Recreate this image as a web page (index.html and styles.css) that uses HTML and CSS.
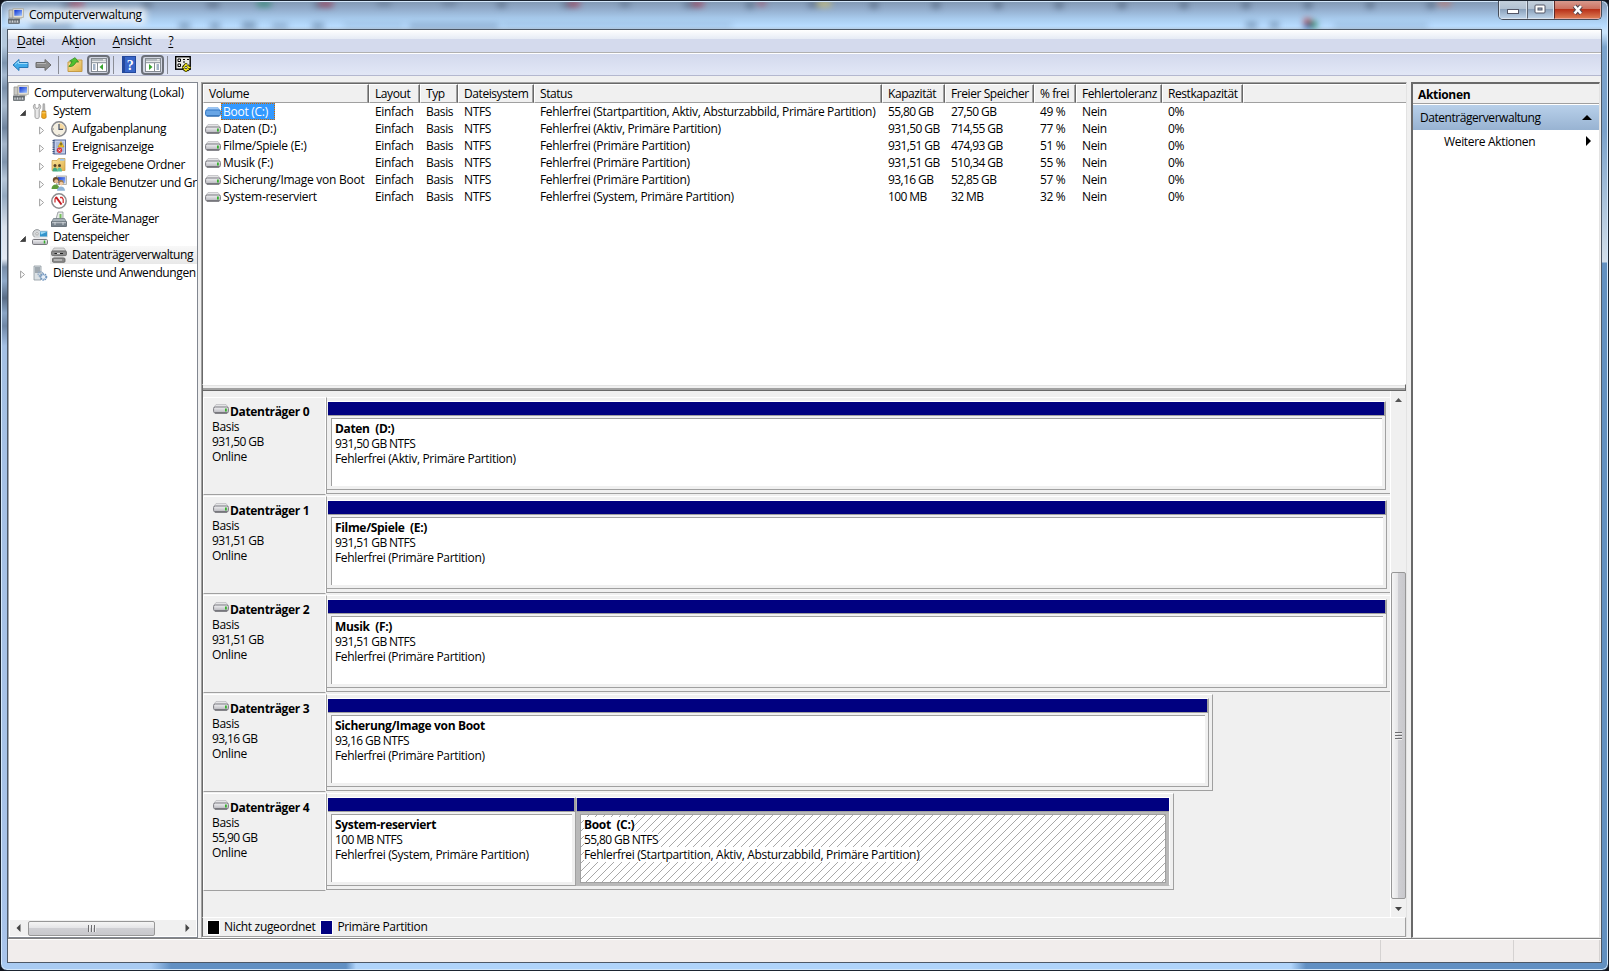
FILE: index.html
```
<!DOCTYPE html>
<html lang="de">

<head>
	<meta charset="utf-8">
	<title>Computerverwaltung</title>

	<link rel="stylesheet" href="styles.css">
</head>

<body>

	<!-- shared icons -->
	<svg class="defs" width="0" height="0">
		<defs>
			<linearGradient id="metal" x1="0" y1="0" x2="0" y2="1">
				<stop offset="0" stop-color="#f2f2f4"/>
				<stop offset="1" stop-color="#b4b4ba"/>
			</linearGradient>
			<linearGradient id="screen" x1="0" y1="0" x2="1" y2="1">
				<stop offset="0" stop-color="#0a2fd0"/>
				<stop offset="1" stop-color="#9fc4ff"/>
			</linearGradient>
			<linearGradient id="gold" x1="0" y1="0" x2="1" y2="1">
				<stop offset="0" stop-color="#fbe7a0"/>
				<stop offset="1" stop-color="#dfb04a"/>
			</linearGradient>
			<symbol id="disk" viewBox="0 0 16 10">
				<path d="M3 .5h10l2.500 3.500H.5z" fill="#e4e4e6" stroke="#b8b8bc" stroke-width=".7"/>
				<rect x=".6" y="3" width="14.800" height="6" rx="1.600" fill="url(#metal)" stroke="#7b7b81"/>
				<path d="M2 9h12" stroke="#55555b"/>
				<rect x="12" y="4.500" width="1.800" height="3" fill="#35b02c"/>
			</symbol>
			<symbol id="disk-selected" viewBox="0 0 16 10">
				<path d="M3 .5h10l2.500 3.500H.5z" fill="#9cc6f4" stroke="#79aee8" stroke-width=".6"/>
				<rect x=".6" y="3" width="14.800" height="6" rx="1.600" fill="#69a6e6" stroke="#3277c4"/>
				<path d="M2 9h12" stroke="#2c66a8"/>
			</symbol>
			<symbol id="computer" viewBox="0 0 16 16">
				<path d="M1 2h4v8H1z" fill="#c9c9c5" stroke="#8b8b88" stroke-width=".7"/>
				<rect x="5" y=".7" width="10.300" height="8.600" fill="#e9e6dc" stroke="#aaa799" stroke-width=".8"/>
				<rect x="6.300" y="1.900" width="7.700" height="5.900" fill="url(#screen)"/>
				<path d="M7 9.500h6l1 1.700H6z" fill="#c7c4b8"/>
				<path d="M0 10.500h12v2H0z" fill="#70757a"/>
				<rect x=".4" y="12" width="11" height="3.600" rx=".6" fill="#858b90" stroke="#4d5358" stroke-width=".7"/>
				<path d="M2 12.500v2M4.500 12.500v2M7 12.500v2M9.500 12.500v2" stroke="#e6e9eb" stroke-width=".8"/>
			</symbol>
			<symbol id="tools" viewBox="0 0 16 16">
				<path d="M3 1v3.500l2 1 2-1V1c2 1 2.400 4 .2 5.700V14c0 2-4.200 2-4.200 0V6.700C.7 5 1 2 3 1z" fill="#e8e8e8" stroke="#8c8c8c" stroke-width=".8"/>
				<path d="M11 .8h1.600l.3 7h-2.200z" fill="#bbb" stroke="#888" stroke-width=".5"/>
				<path d="M10 8h3.800l.4 6.200c0 1.700-4.600 1.700-4.600 0z" fill="#f0a81c" stroke="#ba7a10" stroke-width=".7"/>
				<path d="M10 9.800h3.800" stroke="#fbe08a" stroke-width=".8"/>
			</symbol>
			<symbol id="clock" viewBox="0 0 16 16">
				<circle cx="8" cy="8" r="7.200" fill="#f3eee0" stroke="#87888c" stroke-width="1.500"/>
				<path d="M8 8h5.800A5.800 5.800 0 0 0 8 2.200z" fill="#f6d9a0"/>
				<path d="M8 3v5.300h4" fill="none" stroke="#43516d" stroke-width="1.200"/>
				<path d="M8 14v-1M2 8h1" stroke="#888"/>
			</symbol>
			<symbol id="eventlog" viewBox="0 0 16 16">
				<rect x="3" y="1" width="11.500" height="14" fill="#c4d0ea" stroke="#5a6c9c"/>
				<path d="M2.500 1v14" stroke="#38507e" stroke-width="2" stroke-dasharray="1.200 1"/>
				<path d="M5 4h8M5 6h8M5 8h8M5 10h8M5 12h8" stroke="#7f94c4" stroke-width=".7"/>
				<path d="M10 2.500l3 5.500H7z" fill="#fbd12a" stroke="#b98c0c" stroke-width=".6"/>
				<path d="M10 4v2.500" stroke="#222"/>
				<circle cx="8.500" cy="11.300" r="2.700" fill="#d8343c"/>
				<path d="M7.500 10.300l2 2m0-2l-2 2" stroke="#fff" stroke-width=".8"/>
			</symbol>
			<symbol id="shared" viewBox="0 0 16 16">
				<path d="M1 3.500h5l1.500-2H14v12H1z" fill="url(#gold)" stroke="#c79a3c" stroke-width=".7"/>
				<path d="M9 1.700h4.500v2H9z" fill="#9cc5ee"/>
				<circle cx="4" cy="8.500" r="1.500" fill="#594024"/>
				<circle cx="8.500" cy="8.500" r="1.500" fill="#594024"/>
				<path d="M1.500 14.500c0-5.500 5-5.500 5 0z" fill="#43a882"/>
				<path d="M6 14.500c0-5.500 5-5.500 5 0z" fill="#5bbf9c"/>
			</symbol>
			<symbol id="users" viewBox="0 0 16 16">
				<rect x="5.500" y="1" width="10" height="8.500" fill="#e4e4e0" stroke="#9a9a94" stroke-width=".7"/>
				<rect x="6.800" y="2.200" width="7.500" height="6" fill="url(#screen)"/>
				<circle cx="4.800" cy="5" r="3" fill="#6d4c2c"/>
				<circle cx="5.300" cy="6.300" r="2" fill="#e5b88e"/>
				<path d="M.5 14c0-6 8-6 8 0z" fill="#5d9c3c"/>
				<circle cx="10" cy="7.500" r="2.600" fill="#a57a46"/>
				<circle cx="10.300" cy="8.600" r="1.800" fill="#f0cba4"/>
				<path d="M6 15.800c0-5.800 8-5.800 8 0z" fill="#8fb4d6"/>
			</symbol>
			<symbol id="gauge" viewBox="0 0 16 16">
				<circle cx="8" cy="8" r="7.200" fill="#fff" stroke="#8c8c8e" stroke-width="1.500"/>
				<path d="M4 9.500V6l1.500-2M9 4.500h2l1.200 2V10" fill="none" stroke="#d03434" stroke-width="1.300"/>
				<path d="M5 4l5.500 7.500" stroke="#c01c24" stroke-width="2"/>
			</symbol>
			<symbol id="devices" viewBox="0 0 16 16">
				<path d="M7 1h5v7H5z" fill="#e9ebea" stroke="#7d8488" stroke-width=".7"/>
				<path d="M8.500 3h2v4h-2z" fill="#74c05c"/>
				<path d="M2.500 7.500h11l2 3.500H.5z" fill="#a8b2b9" stroke="#69747c" stroke-width=".7"/>
				<rect x=".5" y="11" width="15" height="4.500" fill="#77828b" stroke="#4c565e" stroke-width=".7"/>
				<path d="M1 11.700h14M4 11v3M12 11v3" stroke="#dfe4e7" stroke-width=".8"/>
			</symbol>
			<symbol id="storage" viewBox="0 0 16 16">
				<circle cx="5" cy="4.800" r="4.200" fill="#d5d8da" stroke="#979b9e"/>
				<circle cx="5" cy="4.800" r="1.200" fill="#fff" stroke="#888" stroke-width=".6"/>
				<path d="M7.500 2h8v6h-8z" fill="#3294cc" stroke="#d4dde2"/>
				<path d="M8.500 3h6L9 5.500z" fill="#9ad8f4"/>
				<path d="M2 8.300h12l1.500 2.500H.5z" fill="#ececee"/>
				<rect x=".5" y="10.500" width="15" height="5" rx="1.200" fill="url(#metal)" stroke="#77777d"/>
				<path d="M12.500 11.500v3" stroke="#35b02c" stroke-width="1.500"/>
			</symbol>
			<symbol id="diskmgmt" viewBox="0 0 16 16">
				<path d="M3 1h10l2 3H1z" fill="#ddd" stroke="#999" stroke-width=".6"/>
				<rect x=".6" y="4" width="14.800" height="4.600" rx="1" fill="#8f8f8f" stroke="#5c5c5c" stroke-width=".8"/>
				<path d="M3.500 6.500h2.500M9 6.500h3" stroke="#222" stroke-width="1.200"/>
				<path d="M6 6.500h3" stroke="#ddd"/>
				<path d="M3 9h9.500v2H3z" fill="#d0d0d0"/>
				<rect x="1.500" y="11" width="12.500" height="4.300" rx="1" fill="#8a8a8a" stroke="#5c5c5c" stroke-width=".8"/>
				<path d="M3 13h8" stroke="#ddd"/>
			</symbol>
			<symbol id="services" viewBox="0 0 16 16">
				<path d="M2 1h7v14H2z" fill="#dbe1e5" stroke="#8d979e" stroke-width=".8"/>
				<path d="M3 3h5M3 5h5M3 7h5" stroke="#65717a"/>
				<circle cx="8.500" cy="9" r="2.200" fill="none" stroke="#93abc4" stroke-width="1.800" stroke-dasharray="1.200 .6"/>
				<circle cx="11.500" cy="12" r="2.800" fill="#e8f0f8" stroke="#6f94bd" stroke-width="2" stroke-dasharray="1.300 .7"/>
			</symbol>
			<symbol id="open" viewBox="0 0 6 6">
				<path d="M5.500.5v5h-5z" fill="#404040" stroke="#222" stroke-width=".6"/>
			</symbol>
			<symbol id="closed" viewBox="0 0 6 9">
				<path d="M.6 1l4 3.500-4 3.500z" fill="#fff" stroke="#a3a3a3"/>
			</symbol>
			<symbol id="pane-icon" viewBox="0 0 16 14">
				<rect x=".5" y=".5" width="15" height="13" fill="#fff" stroke="#858b92"/>
				<path d="M1 2h14M1 4.500h14" stroke="#9ba2a9" stroke-width="1.400"/>
				<path d="M12 1.800h2.500" stroke="#fff"/>
			</symbol>
		</defs>
	</svg>

	<div class="window">
		<!-- blurred desktop behind the glass -->
		<svg class="glass" width="1605" height="27">
			<g fill="#3d4e66" opacity=".6">
				<path d="M60 0h14v5H60zM140 0h10v5h-10zM205 0h12v5h-12zM312 0h18v5h-18zM375 0h14v3h-14zM440 0h14v3h-14zM495 0h9v5h-9zM560 0h14v5h-14zM618 0h10v4h-10zM682 0h16v5h-16zM744 0h8v6h-8zM806 0h12v5h-12zM868 0h8v6h-8zM930 0h8v6h-8zM992 0h8v6h-8zM1053 0h8v6h-8zM1116 0h8v6h-8zM1178 0h8v6h-8zM1240 0h8v6h-8zM1302 0h8v6h-8zM1364 0h8v6h-8zM1425 0h8v6h-8z"/>
			</g>
			<g fill="#b81c34" opacity=".75">
				<path d="M68 0h14v4H68zM317 0h14v4h-14zM566 0h12v4h-12zM690 0h12v4h-12zM755 0h9v3h-9z"/>
			</g>
			<path d="M255 0h14v4h-14z" fill="#238467"/>
			<path d="M815 0h14v4h-14z" fill="#d8c566"/>
			<path d="M1436 0h13v3h-13z" fill="#d56850"/>
			<g fill="#516d8c" opacity=".6">
				<path d="M28 22h42v5H28zM177 21h11v6h-11zM208 21h10v6h-10zM240 20h14v7h-14zM270 22h16v4h-16zM310 21h12v6h-12zM407 22h90v4h-90zM1244 20h11v6h-11zM1268 20h9v6h-9z"/>
			</g>
			<path d="M342 22h60v3h-60zM500 22h230v3H500zM1332 22h94v4h-94z" fill="#516d8c" opacity=".35"/>
			<path d="M1302 17h7v5h-7z" fill="#bb3636"/>
			<path d="M1302 22h7v5h-7z" fill="#326eb8"/>
			<path d="M1309 19h6v7h-6z" fill="#2d8765"/>
			<path d="M5 6h140v16H5z" fill="#fff" opacity=".55"/>
		</svg>

		<div class="titlebar">
			<svg class="icon"><use href="#computer"/></svg>
			<span class="title">Computerverwaltung</span>
			<div class="controls">
				<div class="control minimize"><svg width="13" height="6"><rect x=".5" y=".5" width="11" height="4" fill="#fff" stroke="#535666"/></svg></div>
				<div class="control maximize"><svg width="13" height="11"><rect x="1" y="1" width="10" height="8" rx="1" fill="#fff" stroke="#535666"/><rect x="4" y="4" width="4" height="2" fill="#9cb4cc" stroke="#535666"/></svg></div>
				<div class="control close"><svg width="14" height="12"><path d="M3.500 2l6.500 7.500M10 2L3.500 9.500" stroke="#4f4650" stroke-width="4.500"/><path d="M3.500 2l6.500 7.500M10 2L3.500 9.500" stroke="#fff" stroke-width="2.600"/></svg></div>
			</div>
		</div>

		<div class="client">
			<nav class="menu">
				<span><u>D</u>atei</span>
				<span>Ak<u>t</u>ion</span>
				<span><u>A</u>nsicht</span>
				<span><u>?</u></span>
			</nav>

			<div class="toolbar">
				<svg class="tool-back" width="17" height="14"><path d="M1 7l6-5.500V4.500h9v5H7v3z" fill="#3faaea" stroke="#2777b4"/><path d="M3 6.500l3.500-3v2h9" fill="none" stroke="#9edbfa"/></svg>
				<svg class="tool-forward" width="17" height="14"><path d="M16 7l-6-5.500V4.500H1v5h9v3z" fill="#8d8d8d" stroke="#6c6c6c"/><path d="M2 5.500h9" stroke="#b5b5b5"/></svg>
				<i class="separator"></i>
				<svg class="tool-up" width="16" height="17"><path d="M1 6h5l1.500-2H15v11.500H1z" fill="url(#gold)" stroke="#c59b46"/><path d="M3 11.500c1-1 1.500-3 2-5.500H2.500L7 1.500l4.500 3.500L9 5.500c-.5 3-2.500 6-6 6z" transform="rotate(14 7 6)" fill="#4fc130" stroke="#2b871b" stroke-width=".7"/></svg>
				<div class="toggle tree-toggle">
					<svg width="16" height="14"><use href="#pane-icon"/><path d="M2 7h2.500M2 9h2.500M2 11h2.500" stroke="#47668c"/><path d="M6.500 5v8" stroke="#858b92"/><path d="M12 6v6L8.500 9z" fill="#36a32c"/></svg>
				</div>
				<i class="separator"></i>
				<svg class="tool-help" width="14" height="17"><rect x=".5" y=".5" width="13" height="16" fill="#3865c8" stroke="#23489c"/><path d="M2 1v15" stroke="#254a9c" stroke-width="2"/><text x="8" y="13.500" text-anchor="middle" class="help-mark">?</text></svg>
				<div class="toggle action-toggle">
					<svg width="16" height="14"><use href="#pane-icon"/><path d="M11.500 7H14M11.500 9H14M11.500 11H14" stroke="#47668c"/><path d="M9.500 5v8" stroke="#858b92"/><path d="M4 6v6l3.500-3z" fill="#36a32c"/></svg>
				</div>
				<i class="separator"></i>
				<svg class="tool-settings" width="17" height="17"><rect x=".7" y=".7" width="14.500" height="12.500" fill="#e8e8e4" stroke="#000" stroke-width="1.400"/><path d="M3 3h2.500v2.500H3zM3 8h2.500v2.500H3z" fill="#fff" stroke="#000"/><path d="M8 3.500h2M12 3.500h2M8 6h2" stroke="#000"/><path d="M11 7v9M7 11.500h9M8.500 9l5.500 5.500M14 9l-5.500 5.500" stroke="#000" stroke-width="2.400"/><path d="M11 7.500v8M7.500 11.500h8M9 9.500l4.500 4.500M13.500 9.500L9 14" stroke="#fbf018" stroke-width="1.700"/><circle cx="11" cy="11.500" r="1.200" fill="#fff" stroke="#000" stroke-width=".7"/></svg>
			</div>

			<div class="panes">
				<div class="tree">
					<ul>
						<li class="root"><svg class="icon"><use href="#computer"/></svg><span>Computerverwaltung (Lokal)</span></li>
						<li class="level1"><svg class="open"><use href="#open"/></svg><svg class="icon"><use href="#tools"/></svg><span>System</span></li>
						<li class="level2"><svg class="closed"><use href="#closed"/></svg><svg class="icon"><use href="#clock"/></svg><span>Aufgabenplanung</span></li>
						<li class="level2"><svg class="closed"><use href="#closed"/></svg><svg class="icon"><use href="#eventlog"/></svg><span>Ereignisanzeige</span></li>
						<li class="level2"><svg class="closed"><use href="#closed"/></svg><svg class="icon"><use href="#shared"/></svg><span>Freigegebene Ordner</span></li>
						<li class="level2"><svg class="closed"><use href="#closed"/></svg><svg class="icon"><use href="#users"/></svg><span>Lokale Benutzer und Gruppen</span></li>
						<li class="level2"><svg class="closed"><use href="#closed"/></svg><svg class="icon"><use href="#gauge"/></svg><span>Leistung</span></li>
						<li class="level2 leaf"><svg class="icon"><use href="#devices"/></svg><span>Geräte-Manager</span></li>
						<li class="level1"><svg class="open"><use href="#open"/></svg><svg class="icon"><use href="#storage"/></svg><span>Datenspeicher</span></li>
						<li class="level2 leaf selected"><svg class="icon"><use href="#diskmgmt"/></svg><span>Datenträgerverwaltung</span></li>
						<li class="level1"><svg class="closed"><use href="#closed"/></svg><svg class="icon"><use href="#services"/></svg><span>Dienste und Anwendungen</span></li>
					</ul>
					<div class="hscroll">
						<svg class="arrow" width="5" height="8"><path d="M4.500 0v8L.5 4z" fill="#444"/></svg>
						<div class="hthumb"><i></i><i></i><i></i></div>
						<svg class="arrow" width="5" height="8"><path d="M.5 0v8l4-4z" fill="#444"/></svg>
					</div>
				</div>

				<div class="main">
					<div class="volumes">
						<div class="row head">
							<span>Volume</span><span>Layout</span><span>Typ</span><span>Dateisystem</span><span>Status</span><span>Kapazität</span><span>Freier Speicher</span><span>% frei</span><span>Fehlertoleranz</span><span>Restkapazität</span><span></span>
						</div>
						<div class="row">
							<span class="name"><svg class="disk"><use href="#disk-selected"/></svg><b class="marked">Boot (C:)</b></span><span>Einfach</span><span>Basis</span><span>NTFS</span><span>Fehlerfrei (Startpartition, Aktiv, Absturzabbild, Primäre Partition)</span><span class="num">55,80 GB</span><span class="num">27,50 GB</span><span>49 %</span><span>Nein</span><span>0%</span>
						</div>
						<div class="row">
							<span class="name"><svg class="disk"><use href="#disk"/></svg><b>Daten (D:)</b></span><span>Einfach</span><span>Basis</span><span>NTFS</span><span>Fehlerfrei (Aktiv, Primäre Partition)</span><span class="num">931,50 GB</span><span class="num">714,55 GB</span><span>77 %</span><span>Nein</span><span>0%</span>
						</div>
						<div class="row">
							<span class="name"><svg class="disk"><use href="#disk"/></svg><b>Filme/Spiele (E:)</b></span><span>Einfach</span><span>Basis</span><span>NTFS</span><span>Fehlerfrei (Primäre Partition)</span><span class="num">931,51 GB</span><span class="num">474,93 GB</span><span>51 %</span><span>Nein</span><span>0%</span>
						</div>
						<div class="row">
							<span class="name"><svg class="disk"><use href="#disk"/></svg><b>Musik (F:)</b></span><span>Einfach</span><span>Basis</span><span>NTFS</span><span>Fehlerfrei (Primäre Partition)</span><span class="num">931,51 GB</span><span class="num">510,34 GB</span><span>55 %</span><span>Nein</span><span>0%</span>
						</div>
						<div class="row">
							<span class="name"><svg class="disk"><use href="#disk"/></svg><b>Sicherung/Image von Boot</b></span><span>Einfach</span><span>Basis</span><span>NTFS</span><span>Fehlerfrei (Primäre Partition)</span><span class="num">93,16 GB</span><span class="num">52,85 GB</span><span>57 %</span><span>Nein</span><span>0%</span>
						</div>
						<div class="row">
							<span class="name"><svg class="disk"><use href="#disk"/></svg><b>System-reserviert</b></span><span>Einfach</span><span>Basis</span><span>NTFS</span><span>Fehlerfrei (System, Primäre Partition)</span><span class="num">100 MB</span><span class="num">32 MB</span><span>32 %</span><span>Nein</span><span>0%</span>
						</div>
					</div>

					<div class="splitter"></div>

					<div class="map">
						<div class="disks">
							<div class="drive">
								<div class="label"><h3><svg class="disk"><use href="#disk"/></svg>Datenträger 0</h3><p>Basis</p><p class="num">931,50 GB</p><p>Online</p></div>
								<div class="graph">
									<div class="partition" style="width: 1059px"><div class="bar"></div><div class="info"><h4>Daten&nbsp; (D:)</h4><p class="num">931,50 GB NTFS</p><p>Fehlerfrei (Aktiv, Primäre Partition)</p></div></div>
								</div>
							</div>
							<div class="drive">
								<div class="label"><h3><svg class="disk"><use href="#disk"/></svg>Datenträger 1</h3><p>Basis</p><p class="num">931,51 GB</p><p>Online</p></div>
								<div class="graph">
									<div class="partition" style="width: 1060px"><div class="bar"></div><div class="info"><h4>Filme/Spiele&nbsp; (E:)</h4><p class="num">931,51 GB NTFS</p><p>Fehlerfrei (Primäre Partition)</p></div></div>
								</div>
							</div>
							<div class="drive">
								<div class="label"><h3><svg class="disk"><use href="#disk"/></svg>Datenträger 2</h3><p>Basis</p><p class="num">931,51 GB</p><p>Online</p></div>
								<div class="graph">
									<div class="partition" style="width: 1060px"><div class="bar"></div><div class="info"><h4>Musik&nbsp; (F:)</h4><p class="num">931,51 GB NTFS</p><p>Fehlerfrei (Primäre Partition)</p></div></div>
								</div>
							</div>
							<div class="drive short">
								<div class="label"><h3><svg class="disk"><use href="#disk"/></svg>Datenträger 3</h3><p>Basis</p><p class="num">93,16 GB</p><p>Online</p></div>
								<div class="graph">
									<div class="partition" style="width: 882px"><div class="bar"></div><div class="info"><h4>Sicherung/Image von Boot</h4><p class="num">93,16 GB NTFS</p><p>Fehlerfrei (Primäre Partition)</p></div></div>
								</div>
							</div>
							<div class="drive short">
								<div class="label"><h3><svg class="disk"><use href="#disk"/></svg>Datenträger 4</h3><p>Basis</p><p class="num">55,90 GB</p><p>Online</p></div>
								<div class="graph">
									<div class="partition" style="width: 249px"><div class="bar"></div><div class="info"><h4>System-reserviert</h4><p class="num">100 MB NTFS</p><p>Fehlerfrei (System, Primäre Partition)</p></div></div>
									<div class="partition active" style="width: 594px"><div class="bar"></div><div class="info"><h4>Boot&nbsp; (C:)</h4><p class="num">55,80 GB NTFS</p><p>Fehlerfrei (Startpartition, Aktiv, Absturzabbild, Primäre Partition)</p></div></div>
								</div>
							</div>
						</div>
						<div class="vscroll">
							<svg class="up" width="7" height="4"><path d="M0 4h7L3.500 0z" fill="#555"/></svg>
							<div class="vthumb"><i></i><i></i><i></i></div>
							<svg class="down" width="7" height="4"><path d="M0 0h7L3.500 4z" fill="#444"/></svg>
						</div>
					</div>

					<div class="legend">
						<i class="swatch unallocated"></i><span>Nicht zugeordnet</span>
						<i class="swatch primary"></i><span>Primäre Partition</span>
					</div>
				</div>

				<div class="actions">
					<h2>Aktionen</h2>
					<div class="group"><span>Datenträgerverwaltung</span><svg width="10" height="5"><path d="M0 5h10L5 0z"/></svg></div>
					<div class="action"><span>Weitere Aktionen</span><svg width="5" height="10"><path d="M0 0v10l5-5z"/></svg></div>
				</div>
			</div>

			<div class="statusbar"><span></span><span></span><span></span></div>
		</div>
	</div>

</body>

</html>
```

FILE: styles.css
```
* {
	box-sizing: border-box;
}

body {
	margin: 0;
	background: #10141c;
	font-family: "Open Sans", "Noto Sans", sans-serif;
	font-size: 12px;
	letter-spacing: -0.33px;
	color: #000;
	overflow: hidden;
}

h2, h3, h4, p, ul {
	margin: 0;
	padding: 0;
	font-size: 12px;
}

svg {
	display: block;
	flex: none;
}

.defs {
	position: absolute;
}

.icon {
	width: 16px;
	height: 16px;
}

.disk {
	width: 16px;
	height: 10px;
}

.num {
	letter-spacing: -0.6px;
}

/* window frame */

.window {
	position: relative;
	width: 1609px;
	height: 971px;
	display: flex;
	flex-direction: column;
	padding: 0 6px 7px;
	border: 1px solid #1b2430;
	border-radius: 7px;
	box-shadow: inset 0 0 0 1px #d4e8fb;
	background:
		linear-gradient(#8198b2 0, #92accb 8px, #a9ccee 18px, #b8dcff 25px, transparent 29px) top / 100% 29px no-repeat,
		linear-gradient(#bfdffc 0, #c9e3fb 32px, #7ba3cc 46px, #7aa1ca 130px, #c9d8e6 245px, #d3deea 261px, #6290c0 262px) right / 7px 100% no-repeat,
		linear-gradient(90deg, #a9cbf2 150px, #6290c3 170px, #6290c3 345px, #b0d4fa 355px, #b0d4fa 1290px, #6290c3 1305px) bottom / 100% 8px no-repeat,
		linear-gradient(#b4c8dd 45px, #7d94ae 62px, #a5b9d0 74px, #7a90aa 87px, #a8bace 105px, #70859f 127px, #a5b6ca 143px, #7f94ad 161px, #b6c6d8 178px, #94a9c0 195px, #d9e1ec 226px, #e3eaf4 258px, #788da8 266px, #8fa9c8 280px, #586c86 297px, #8aa5c5 312px, #6f87a6 325px, #a4c0e4 345px, #a9c4ea);
}

.glass {
	position: absolute;
	top: 1px;
	left: 1px;
	overflow: hidden;
	filter: blur(3px);
	clip-path: inset(0);
}

.titlebar {
	position: relative;
	flex: none;
	height: 28px;
	display: flex;
	align-items: flex-start;
	padding-left: 1px;
}

.titlebar .icon {
	margin: 7px 5px 0 0;
}

.title {
	padding-top: 5px;
	line-height: 18px;
	text-shadow: 0 0 6px #fff, 0 0 8px #fff;
}

.controls {
	display: flex;
	width: 104px;
	height: 19px;
	margin-left: auto;
	border: 1px solid #454c58;
	border-top: none;
	border-radius: 0 0 5px 5px;
	overflow: hidden;
}

.control {
	display: flex;
	align-items: center;
	justify-content: center;
	width: 28px;
	border: 1px solid #dbe4ee;
	border-top: none;
	background: linear-gradient(#c3cfdb, #b0c0d1 48%, #8ca2bb 50%, #bcd2e8);
}

.maximize {
	width: 27px;
	border-left-color: #5d6673;
}

.close {
	flex: 1;
	border-color: #e8a79a;
	border-left-color: #5e2a28;
	background: linear-gradient(#d8998d, #cb6f5e 48%, #b83119 50%, #dc7a52);
}

.minimize {
	padding-top: 5px;
}

.client {
	flex: 1;
	min-height: 0;
	display: flex;
	flex-direction: column;
	border: 1px solid #4d5866;
	background: #f0f0f0;
}

/* menu and toolbar */

.menu {
	flex: none;
	display: flex;
	height: 23px;
	padding-left: 9px;
	gap: 17px;
	line-height: 22px;
	background: linear-gradient(#fff, #e6ebf5 9px, #d4daed 9px);
	border-bottom: 1px solid #b0b0b0;
}

.menu u {
	text-underline-offset: 2px;
}

.toolbar {
	flex: none;
	display: flex;
	align-items: center;
	height: 23px;
	padding-left: 4px;
	border-top: 1px solid #fff;
	border-bottom: 1px solid #b4b8cf;
	background: linear-gradient(#d3d9ed, #e2e7f6);
}

.separator {
	width: 1px;
	height: 18px;
	margin-left: 3px;
	background: #8a8d96;
}

.tool-forward {
	margin-left: 6px;
}

.tool-back + .tool-forward + .separator {
	margin-left: 6px;
}

.tool-up {
	margin: 0 4px 0 8px;
}

.toggle {
	display: flex;
	align-items: center;
	justify-content: center;
	width: 23px;
	height: 20px;
	border: 2px solid #6c7079;
	border-radius: 4px;
	background: #d2d6e2;
}

.tool-help {
	margin: 0 5px 0 8px;
}

.help-mark {
	font: bold 14px "Liberation Serif", serif;
	fill: #fff;
}

.tool-settings {
	margin-left: 7px;
}

/* panes */

.panes {
	flex: 1;
	min-height: 0;
	display: flex;
	padding: 6px 1px 0 0;
}

.tree {
	width: 190px;
	display: flex;
	flex-direction: column;
	border: 1px solid #828790;
	border-left-color: #a5a9b0;
	background: #fff;
	margin-right: 3px;
	flex: none;
}

.tree ul {
	flex: 1;
	list-style: none;
	overflow: hidden;
	padding-top: 1px;
}

.tree li {
	display: flex;
	align-items: center;
	height: 18px;
	white-space: nowrap;
	overflow: hidden;
}

.tree li span {
	margin-left: 5px;
	padding-bottom: 2px;
}

.root {
	padding-left: 4px;
}

.level1 {
	padding-left: 11px;
}

.level1 .icon {
	margin-left: 6px;
}

.level1 span {
	letter-spacing: -0.4px;
}

.level2 {
	padding-left: 30px;
}

.level2.leaf {
	padding-left: 42px;
}

.level2 .closed {
	margin-right: 6px;
}

.open {
	width: 6px;
	height: 6px;
	margin-top: 3px;
}

.closed {
	width: 6px;
	height: 9px;
	margin-top: 2px;
}

.selected {
	background: linear-gradient(#f8f8f8, #e8e8e8) 41px 0 no-repeat;
}

.selected span {
	letter-spacing: -0.42px;
}

.hscroll {
	display: flex;
	align-items: center;
	height: 16px;
	margin: 0 1px 1px;
	padding: 0 6px;
	background: #f0f0f0;
}

.hthumb {
	display: flex;
	align-items: center;
	justify-content: center;
	gap: 1px;
	width: 127px;
	height: 15px;
	margin: 0 auto 0 7px;
	border: 1px solid #979797;
	border-radius: 2px;
	background: linear-gradient(#f5f5f5, #e4e4e6 48%, #cfcfd3 50%, #c8c8cc);
}

.hthumb i {
	width: 2px;
	height: 7px;
	background: #6d6d70;
	border-right: 1px solid #eee;
}

/* volume list */

.main {
	width: 1206px;
	flex: none;
	display: flex;
	flex-direction: column;
	margin-right: 4px;
	border: 1px solid #a0a0a0;
	border-right-color: #e3e3e3;
	border-bottom-color: #fff;
}

.volumes {
	flex: none;
	height: 301px;
	border-top: 1px solid #696969;
	border-left: 1px solid #696969;
	background: #fff;
}

.row {
	display: grid;
	grid-template-columns: 166px 51px 38px 76px 348px 63px 89px 42px 86px 81px 1fr;
	height: 17px;
	line-height: 17px;
	white-space: nowrap;
}

.row span {
	padding-left: 6px;
}

.row.head {
	height: 19px;
	line-height: 18px;
	background: #f0f0f0;
	border-bottom: 1px solid #696969;
}

.head span {
	border-top: 1px solid #fff;
	border-left: 1px solid #fff;
	border-right: 1px solid #696969;
	border-bottom: 1px solid #a0a0a0;
	box-shadow: inset -1px 0 #a0a0a0;
	padding-left: 5px;
	line-height: 17px;
	letter-spacing: -0.42px;
}

.head span:last-child {
	border-right: none;
	box-shadow: none;
}

.row .name {
	display: flex;
	align-items: center;
	padding-left: 2px;
	letter-spacing: -0.26px;
}

.name b {
	font-weight: normal;
	padding: 0 6px 0 2px;
}

.name .marked {
	height: 17px;
	padding-right: 7px;
	color: #fff;
	background: #3399ff;
	outline: 1px dotted #cc6600;
	outline-offset: -1px;
}

.splitter {
	flex: none;
	height: 7px;
	border-top: 1px solid #fff;
	border-right: 1px solid #696969;
	border-bottom: 1px solid #696969;
	border-left: 1px solid #696969;
	background: linear-gradient(#e3e3e3 0 1px, #f0f0f0 1px 3px, #a0a0a0 3px);
}

/* disk map */

.map {
	flex: 1;
	min-height: 0;
	display: flex;
	border-left: 1px solid #696969;
}

.disks {
	flex: 1;
	padding-top: 6px;
}

.drive {
	display: flex;
	align-items: flex-start;
	height: 98px;
	margin-bottom: 1px;
	line-height: 15px;
}

.label {
	width: 123px;
	height: 98px;
	padding: 6px 0 0 8px;
	border: 1px solid #fff;
	border-bottom-color: #a0a0a0;
}

.label h3 {
	display: flex;
	padding-left: 1px;
}

.label h3 .disk {
	margin-right: 1px;
}

.graph {
	flex: 1;
	display: flex;
	height: 97px;
	padding-top: 3px;
	border-top: 1px solid #fff;
	border-left: 1px solid #a0a0a0;
	border-bottom: 1px solid #a0a0a0;
	white-space: nowrap;
}

.short .graph {
	flex: none;
	padding-right: 3px;
	border-right: 1px solid #a0a0a0;
}

.partition {
	height: 89px;
	padding-left: 1px;
	border-top: 1px solid #fff;
	border-right: 1px solid #a0a0a0;
	border-bottom: 1px solid #a0a0a0;
}

.bar {
	height: 14px;
	background: #000080;
	border-right: 1px solid #a0a0a0;
	border-bottom: 1px solid #a0a0a0;
}

.info {
	height: 68px;
	margin: 2px 3px 0;
	padding: 2px 0 0 3px;
	border-top: 1px solid #a0a0a0;
	border-left: 1px solid #a0a0a0;
	background: #fff;
}

.active {
	background: #b9b9b9;
	border-right-color: #fff;
	border-bottom-color: #b9b9b9;
}

.active .bar {
	border-right: none;
}

.active .info {
	height: 69px;
	border: 1px solid #a0a0a0;
	background: repeating-linear-gradient(135deg, #fff 0 4.950px, #a8a8a8 4.950px 5.657px);
}

.active h4, .active p {
	width: fit-content;
	background: #fff;
}

.vscroll {
	display: flex;
	flex-direction: column;
	align-items: center;
	width: 16px;
	background: #f0f0f0;
	border-left: 1px solid #fff;
	padding: 7px 1px 6px 0;
}

.vthumb {
	display: flex;
	flex-direction: column;
	align-items: center;
	justify-content: center;
	gap: 1px;
	width: 15px;
	height: 327px;
	margin: auto 0 8px;
	border: 1px solid #979797;
	border-radius: 2px;
	background: linear-gradient(90deg, #f5f5f5, #e4e4e6 48%, #cfcfd3 50%, #c8c8cc);
}

.vthumb i {
	width: 7px;
	height: 2px;
	background: #6d6d70;
	border-bottom: 1px solid #eee;
}

.legend {
	flex: none;
	display: flex;
	align-items: center;
	height: 20px;
	padding-left: 5px;
	border: 1px solid #a0a0a0;
	border-top-color: #fff;
	border-left-color: #696969;
	line-height: 18px;
}

.swatch {
	width: 11px;
	height: 13px;
	margin-right: 5px;
	outline: 1px solid #fff;
}

.legend span {
	margin-right: 6px;
}

.unallocated {
	background: #000;
}

.primary {
	background: #000080;
}

/* actions pane */

.actions {
	flex: 1;
	border: 2px solid #696969;
	border-right: 1px solid #e3e3e3;
	border-bottom: 1px solid #e3e3e3;
	background: #fff;
}

.actions h2 {
	height: 20px;
	padding-left: 5px;
	line-height: 21px;
	background: #f0f0f0;
	border-bottom: 1px solid #a0a0a0;
}

.group, .action {
	display: flex;
	align-items: center;
	justify-content: space-between;
}

.group {
	height: 25px;
	margin-top: 1px;
	padding: 0 7px;
	letter-spacing: -0.45px;
	background: linear-gradient(#b8d0ea, #98b3d2);
}

.action {
	height: 22px;
	padding: 0 8px 0 31px;
}

/* status bar */

.statusbar {
	flex: none;
	display: flex;
	justify-content: flex-end;
	height: 24px;
	padding: 1px 1px 1px 0;
	border-top: 1px solid #828282;
	background: #f1edec;
	box-shadow: inset 0 1px #fff;
}

.statusbar span {
	width: 133px;
	border-right: 1px solid #d5d2d1;
}

.statusbar span:last-child {
	width: 86px;
}
```
